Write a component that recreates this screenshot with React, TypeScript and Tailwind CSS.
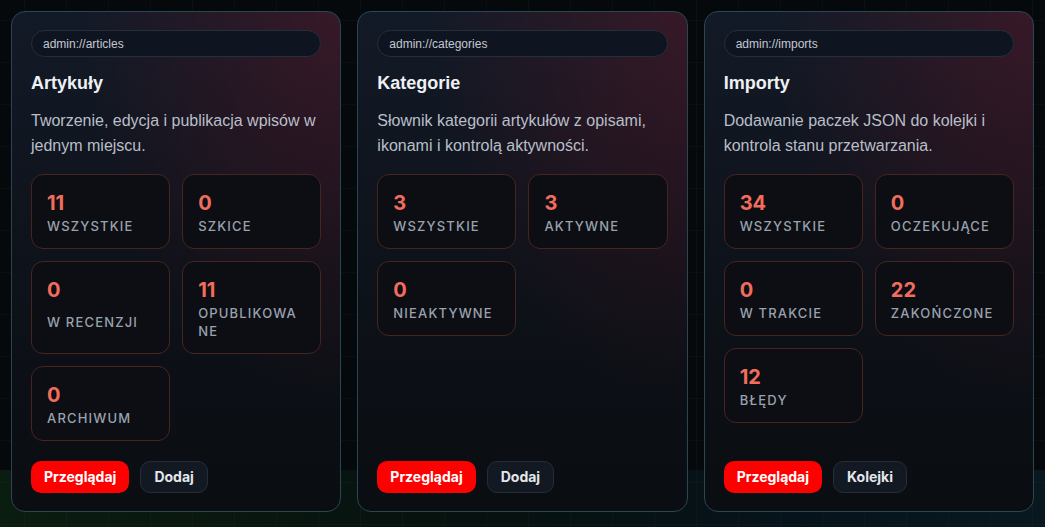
type Stat = { value: number; label: string };

type Panel = {
  url: string;
  title: string;
  description: string;
  stats: Stat[];
  secondary: string;
};

const panels: Panel[] = [
  {
    url: "admin://articles",
    title: "Artykuły",
    description: "Tworzenie, edycja i publikacja wpisów w jednym miejscu.",
    stats: [
      { value: 11, label: "Wszystkie" },
      { value: 0, label: "Szkice" },
      { value: 0, label: "W recenzji" },
      { value: 11, label: "Opublikowane" },
      { value: 0, label: "Archiwum" },
    ],
    secondary: "Dodaj",
  },
  {
    url: "admin://categories",
    title: "Kategorie",
    description: "Słownik kategorii artykułów z opisami, ikonami i kontrolą aktywności.",
    stats: [
      { value: 3, label: "Wszystkie" },
      { value: 3, label: "Aktywne" },
      { value: 0, label: "Nieaktywne" },
    ],
    secondary: "Dodaj",
  },
  {
    url: "admin://imports",
    title: "Importy",
    description: "Dodawanie paczek JSON do kolejki i kontrola stanu przetwarzania.",
    stats: [
      { value: 34, label: "Wszystkie" },
      { value: 0, label: "Oczekujące" },
      { value: 0, label: "W trakcie" },
      { value: 22, label: "Zakończone" },
      { value: 12, label: "Błędy" },
    ],
    secondary: "Kolejki",
  },
];

function StatBox({ stat }: { stat: Stat }) {
  return (
    <div className="grid rounded-xl border border-[#47251f] bg-[#0c0e13] px-[15px] pt-[14px] pb-[13px]">
      <span className="font-['Inter',sans-serif] text-xl leading-7 font-bold text-[#f26d5c]">
        {stat.value}
      </span>
      <span className="font-['Inter',sans-serif] text-[13px] leading-[18px] font-medium uppercase tracking-[0.09em] text-[#9aa2ae] [overflow-wrap:anywhere]">
        {stat.label}
      </span>
    </div>
  );
}

function PanelCard({ panel }: { panel: Panel }) {
  return (
    <div className="flex flex-1 flex-col rounded-[14px] border border-[#2a4651] bg-[radial-gradient(ellipse_at_top_right,rgba(125,22,40,0.34),transparent_55%),linear-gradient(180deg,#131a27_0%,#0e121a_50%,#0a0d11_100%)] px-[19px] pt-[18px] pb-[18px]">
      <div className="flex h-[27px] items-center rounded-full border border-[#252f3c] bg-[#0f1520] px-[11px] font-['Liberation_Sans',Arial,sans-serif] text-xs text-[#c3c9d1]">
        {panel.url}
      </div>
      <h2 className="mt-[14px] font-['Liberation_Sans',Arial,sans-serif] text-[18px] leading-6 font-bold text-[#eef0f4]">
        {panel.title}
      </h2>
      <p className="mt-[13px] font-['Liberation_Sans',Arial,sans-serif] text-base leading-[25px] text-[#b8bfc9]">
        {panel.description}
      </p>
      <div className="mt-4 grid grid-cols-2 gap-3">
        {panel.stats.map((s) => (
          <StatBox key={s.label} stat={s} />
        ))}
      </div>
      <div className="mt-auto flex gap-[11px] pt-5 font-['Inter',sans-serif] text-sm font-bold">
        <button className="h-8 rounded-[10px] bg-[#ff0000] px-[13px] text-white">Przeglądaj</button>
        <button className="h-8 rounded-[10px] border border-[#262d39] bg-[#131923] px-[13px] text-[#e3e6ea]">
          {panel.secondary}
        </button>
      </div>
    </div>
  );
}

export default function App() {
  return (
    <div className="min-h-screen bg-[#05090c] [background-image:linear-gradient(rgba(110,150,160,0.045)_1px,transparent_1px),linear-gradient(90deg,rgba(110,150,160,0.045)_1px,transparent_1px),linear-gradient(90deg,#0b1c10_0%,#07110f_45%,#06131a_75%,#08181e_100%)] [background-size:42px_42px,42px_42px,100%_57px] [background-position:24px_20px,24px_20px,0_470px] [background-repeat:repeat,repeat,no-repeat]">
      <div className="flex gap-4 p-[11px]">
        {panels.map((p) => (
          <PanelCard key={p.url} panel={p} />
        ))}
      </div>
    </div>
  );
}
